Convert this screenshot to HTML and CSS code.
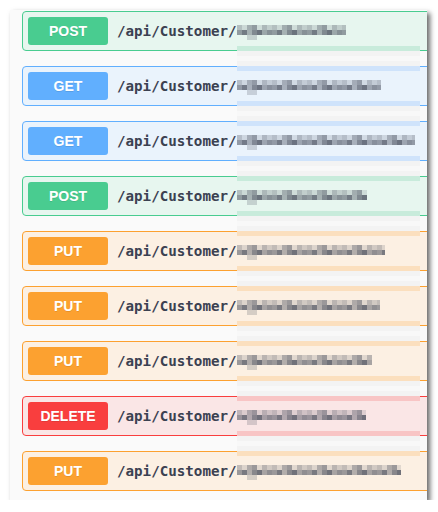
FILE: index.html
```html
<!DOCTYPE html>
<html>
<head>
<meta charset="utf-8">
<link rel="stylesheet" href="styles.css">
</head>
<body>
<div class="panel">
  <div class="op post first">
    <span class="method">POST</span><span class="path">/api/Customer/</span>
    <div class="blur"><div class="band"></div><div class="mid"><div class="m1" style="width:109px"></div><div class="m2" style="width:109px"></div><div class="m3"></div></div><div class="band"></div><div class="gap"></div></div>
  </div>
  <div class="op get">
    <span class="method">GET</span><span class="path">/api/Customer/</span>
    <div class="blur"><div class="band"></div><div class="mid"><div class="m1" style="width:144px"></div><div class="m2" style="width:144px"></div><div class="m3"></div></div><div class="band"></div><div class="gap"></div></div>
  </div>
  <div class="op get">
    <span class="method">GET</span><span class="path">/api/Customer/</span>
    <div class="blur"><div class="band"></div><div class="mid"><div class="m1" style="width:178px"></div><div class="m2" style="width:178px"></div><div class="m3"></div></div><div class="band"></div><div class="gap"></div></div>
  </div>
  <div class="op post">
    <span class="method">POST</span><span class="path">/api/Customer/</span>
    <div class="blur"><div class="band"></div><div class="mid"><div class="m1" style="width:130px"></div><div class="m2" style="width:130px"></div><div class="m3"></div></div><div class="band"></div><div class="gap"></div></div>
  </div>
  <div class="op put">
    <span class="method">PUT</span><span class="path">/api/Customer/</span>
    <div class="blur"><div class="band"></div><div class="mid"><div class="m1" style="width:148px"></div><div class="m2" style="width:148px"></div><div class="m3"></div></div><div class="band"></div><div class="gap"></div></div>
  </div>
  <div class="op put">
    <span class="method">PUT</span><span class="path">/api/Customer/</span>
    <div class="blur"><div class="band"></div><div class="mid"><div class="m1" style="width:143px"></div><div class="m2" style="width:143px"></div><div class="m3"></div></div><div class="band"></div><div class="gap"></div></div>
  </div>
  <div class="op put">
    <span class="method">PUT</span><span class="path">/api/Customer/</span>
    <div class="blur"><div class="band"></div><div class="mid"><div class="m1" style="width:135px"></div><div class="m2" style="width:135px"></div><div class="m3"></div></div><div class="band"></div><div class="gap"></div></div>
  </div>
  <div class="op delete">
    <span class="method">DELETE</span><span class="path">/api/Customer/</span>
    <div class="blur"><div class="band"></div><div class="mid"><div class="m1" style="width:129px"></div><div class="m2" style="width:129px"></div><div class="m3"></div></div><div class="band"></div><div class="gap"></div></div>
  </div>
  <div class="op put last">
    <span class="method">PUT</span><span class="path">/api/Customer/</span>
    <div class="blur"><div class="band"></div><div class="mid"><div class="m1" style="width:164px"></div><div class="m2" style="width:164px"></div><div class="m3"></div></div></div>
  </div>
</div>
</body>
</html>
```
FILE: styles.css
```css
html, body {
  margin: 0;
  padding: 0;
  background: #ffffff;
}
.panel {
  margin: 10px 0 0 10px;
  width: 417px;
  height: 490px;
  background: #fafafa;
  overflow: hidden;
  box-shadow: 3px 3px 5px rgba(0, 0, 0, 0.6);
  padding: 1px 0 0 12px;
  box-sizing: border-box;
  display: flex;
  flex-direction: column;
  gap: 15px;
}
.op {
  position: relative;
  flex: none;
  width: 420px;
  height: 40px;
  box-sizing: border-box;
  border: 1px solid;
  border-radius: 4px;
  display: flex;
  align-items: center;
  padding: 0 5px;
}
.method {
  min-width: 80px;
  height: 28px;
  border-radius: 3px;
  color: #fff;
  font-family: "Liberation Sans", Arial, sans-serif;
  font-weight: 700;
  font-size: 14px;
  display: flex;
  align-items: center;
  justify-content: center;
  text-shadow: 0 1px 0 rgba(0, 0, 0, 0.1);
}
.path {
  margin-left: 9px;
  font-family: "DejaVu Sans Mono", monospace;
  font-weight: 700;
  font-size: 14.2px;
  color: #3b4151;
}
.post { border-color: #49cc90; background: #e7f6ef; }
.post .method { background: #49cc90; }
.get { border-color: #61affe; background: #eaf3fc; }
.get .method { background: #61affe; }
.put { border-color: #fca130; background: #fcf0e3; }
.put .method { background: #fca130; }
.delete { border-color: #f93e3e; background: #fae6e6; }
.delete .method { background: #f93e3e; }

.blur {
  position: absolute;
  top: -1px;
  left: 214px;
  width: 183px;
  display: flex;
  flex-direction: column;
}
.band { height: 5px; }
.post .band { background: #c8ebdb; }
.get .band { background: #cfe3fb; }
.put .band { background: #fbdfbe; }
.delete .band { background: #f8c5c5; }
.first .band:first-child { background: transparent; }
.mid {
  height: 30px;
  padding-top: 9px;
  box-sizing: border-box;
  display: flex;
  flex-direction: column;
}
.m1 {
  height: 5px;
  background: repeating-linear-gradient(90deg,
    rgba(59,65,81,.30) 0 5px, rgba(59,65,81,.16) 5px 10px,
    rgba(59,65,81,.40) 10px 15px, rgba(59,65,81,.50) 15px 20px,
    rgba(59,65,81,.14) 20px 25px, rgba(59,65,81,.34) 25px 30px,
    rgba(59,65,81,.22) 30px 35px);
}
.m2 {
  height: 5px;
  background: repeating-linear-gradient(90deg,
    rgba(59,65,81,.50) 0 5px, rgba(59,65,81,.68) 5px 10px,
    rgba(59,65,81,.38) 10px 15px, rgba(59,65,81,.60) 15px 20px,
    rgba(59,65,81,.72) 20px 25px, rgba(59,65,81,.44) 25px 30px,
    rgba(59,65,81,.56) 30px 35px);
}
.m3 {
  margin-left: 10px;
  width: 10px;
  height: 5px;
  background: rgba(59,65,81,.2);
}
.gap {
  height: 15px;
  background: linear-gradient(#f3f3f3 0 5px, #f8f8f8 5px 10px, #f3f3f3 10px 15px);
}
```
